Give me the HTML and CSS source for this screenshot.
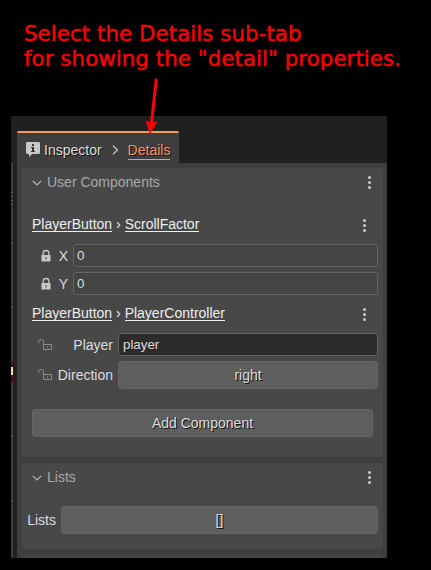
FILE: index.html
```html
<!DOCTYPE html>
<html lang="en">
<head>
<meta charset="utf-8">
<title>Inspector</title>
<link rel="stylesheet" href="styles.css">
</head>
<body>
<svg class="defs" width="0" height="0">
  <symbol id="lock" viewBox="0 0 14 14"><path fill="currentColor" d="M2.5 6h9v6.500h-9z"/><path fill="none" stroke="currentColor" stroke-width="1.3" d="M4.200 6.500V4a2.800 2.500 0 0 1 5.600 0v2.500"/><path fill="#484848" d="M6.500 8h1v2.500h-1z"/></symbol>
  <symbol id="unlock" viewBox="0 0 14 14"><path fill="none" stroke="currentColor" d="M5.500 6.500h8v5h-8zM.6 5.200V4a2.500 2.500 0 0 1 5 0v2.500"/><path fill="currentColor" d="M9 8.500h1v1.500h-1z"/></symbol>
  <symbol id="chevron" viewBox="0 0 10 6"><path fill="none" stroke="currentColor" stroke-width="1.200" d="M.8.8 5 5 9.200.8"/></symbol>
  <symbol id="dots" viewBox="0 0 3 13"><circle cx="1.500" cy="1.500" r="1.500"/><circle cx="1.500" cy="6.500" r="1.500"/><circle cx="1.500" cy="11.500" r="1.500"/></symbol>
</svg>
<p class="note">Select the Details sub-tab<br>for showing the "detail" properties.</p>
<svg class="arrow" width="16" height="58" viewBox="0 0 16 58"><path stroke="#f00" stroke-width="3" stroke-linecap="round" d="M11.200 3 6.500 46"/><path fill="#f00" d="M5 57 .5 43.500l6 2.500 6-1.500z"/></svg>
<main class="window">
  <div class="edge"><i class="scrap"></i><i class="tick tick-a"></i><i class="tick tick-b"></i><i class="sprite"></i><i class="tick tick-c"></i><i class="tick tick-d"></i></div>
  <div class="panel">
    <nav class="tabs">
      <div class="tab">
        <svg class="info" width="14" height="15" viewBox="0 0 14 15"><path fill="#c8c8c8" d="M1 0h12l1 1v10l-1 1H6l-3 3v-3H1l-1-1V1z"/><path fill="#333" d="M6 2h2v2H6zM5 5h3v4h1v1H5V9h1V6H5z"/></svg>
        <span class="crumb">Inspector</span>
        <svg class="next" width="7" height="10" viewBox="0 0 7 10"><path fill="none" stroke="#ccc" stroke-width="1.200" d="m1 .8 4.500 4.200L1 9.200"/></svg>
        <span class="crumb current">Details</span>
      </div>
    </nav>
    <div class="body">
      <section class="card components">
        <header class="head"><svg class="chevron"><use href="#chevron"/></svg><span>User Components</span><svg class="dots"><use href="#dots"/></svg></header>
        <div class="component first"><span><u>PlayerButton</u> › <u>ScrollFactor</u></span><svg class="dots"><use href="#dots"/></svg></div>
        <div class="row vector"><svg class="lock"><use href="#lock"/></svg><label>X</label><div class="input">0</div></div>
        <div class="row vector"><svg class="lock"><use href="#lock"/></svg><label>Y</label><div class="input">0</div></div>
        <div class="component second"><span><u>PlayerButton</u> › <u>PlayerController</u></span><svg class="dots"><use href="#dots"/></svg></div>
        <div class="row"><svg class="lock open"><use href="#unlock"/></svg><label>Player</label><div class="input dark">player</div></div>
        <div class="row"><svg class="lock open"><use href="#unlock"/></svg><label>Direction</label><div class="button">right</div></div>
        <div class="button add">Add Component</div>
      </section>
      <section class="card lists">
        <header class="head"><svg class="chevron"><use href="#chevron"/></svg><span>Lists</span><svg class="dots"><use href="#dots"/></svg></header>
        <div class="row"><label>Lists</label><div class="button">[]</div></div>
      </section>
      <section class="card rest"></section>
    </div>
  </div>
</main>
</body>
</html>
```

FILE: styles.css
```css
* { box-sizing: border-box; }
body {
  margin: 0;
  width: 431px;
  height: 570px;
  overflow: hidden;
  background: #000;
  color: #dcdcdc;
  font: 14px/16px "Liberation Sans", Arial, sans-serif;
  display: flex;
  flex-direction: column;
}
svg { display: block; flex: none; }
.defs { position: absolute; }
.note {
  margin: 0;
  height: 116px;
  flex: none;
  padding: 21px 0 0 24px;
  color: #f00;
  font: 21.3px/25px "DejaVu Sans", sans-serif;
  letter-spacing: .08px;
  -webkit-text-stroke: .4px #f00;
  white-space: nowrap;
}
.arrow { position: absolute; left: 145px; top: 77px; }
.window {
  width: 376px;
  height: 442px;
  margin-left: 11px;
  display: flex;
  background: #202020;
  overflow: hidden;
}
.edge {
  width: 2px;
  margin: 47px 4px 0 0;
  background: #3c3c3c;
  display: flex;
  flex-direction: column;
}
.scrap { height: 15px; margin-top: 29px; background: repeating-linear-gradient(#666 0 1px, #333 1px 4px); }
.tick { height: 2px; background: #555; }
.tick-a { margin-top: 35px; }
.tick-b { margin-top: 62px; }
.sprite { height: 20px; margin-top: 54px; background: linear-gradient(#500d12 0 5px, #eee0b0 5px 13px, #500d12 13px); }
.tick-c { margin-top: 53px; }
.tick-d { margin-top: 63px; }
.panel { flex: 1; display: flex; flex-direction: column; }
.tabs { padding-top: 15px; height: 47px; flex: none; }
.tab {
  width: 162px;
  height: 32px;
  padding: 3px 0 0 9px;
  border-top: 2px solid #f79a5e;
  border-radius: 2px 2px 0 0;
  background: #3e3e3e;
  display: flex;
  align-items: center;
}
.crumb { margin-left: 4px; text-shadow: 1px 1px #111; }
.info { margin-top: 0; }
.next { margin: 1px 0 0 10px; }
.current { margin-left: 9px; height: 18px; margin-top: 2px; color: #f79468; border-bottom: 1px solid #f79468; }
.body { flex: 1; padding: 5px 4px 0 5px; background: #3e3e3e; overflow: hidden; }
.card { background: #484848; border-radius: 3px; margin-bottom: 6px; }
.components { height: 289px; padding-top: 6px; }
.lists { height: 86px; padding-top: 6px; }
.rest { height: 30px; }
.head { height: 16px; padding: 0 12px 0 10px; display: flex; align-items: center; color: #a8a8a8; }
.head span { margin-left: 5px; flex: 1; }
.chevron { width: 10px; height: 6px; margin-top: 1px; color: #bbb; }
.dots { width: 3px; height: 13px; margin-top: 1px; fill: #ccc; }
.component { height: 16px; padding: 0 17px 0 10px; display: flex; justify-content: space-between; align-items: center; color: #eee; }
.component span { white-space: pre; }
.component .dots { margin-top: 3px; }
u { text-decoration: none; display: inline-block; height: 16px; border-bottom: 1px solid #eee; }
.first { margin: 26px 0 12px; }
.second { margin: 10px 0 12px; }
.row { display: flex; align-items: center; padding: 0 5px 0 16px; margin-bottom: 5px; }
.row label { width: 62px; margin: 0 5px 0 -1px; text-align: right; }
.vector label { width: 17px; }
.lock { width: 14px; height: 14px; color: #c8c8c8; }
.vector .lock { margin: 0 -1px 0 1px; }
.open { color: #8c8c8c; }
.input {
  flex: 1;
  height: 23px;
  padding: 0 3px;
  border: 1px solid #646464;
  border-radius: 3px;
  background: #444;
  font-size: 13.333px;
  line-height: 22px;
}
.dark { background: #2b2b2b; padding-left: 4px; }
.button {
  flex: 1;
  height: 28px;
  border: 1px solid #646464;
  border-radius: 3px;
  background: #5e5e5e;
  line-height: 26px;
  text-align: center;
  text-shadow: 1px 1px #111;
}
.add { margin: 20px 10px 0; }
.lists .row { margin-top: 21px; padding-left: 5px; }
.lists label { width: 29px; margin: 0 5px 0 0; }
```
